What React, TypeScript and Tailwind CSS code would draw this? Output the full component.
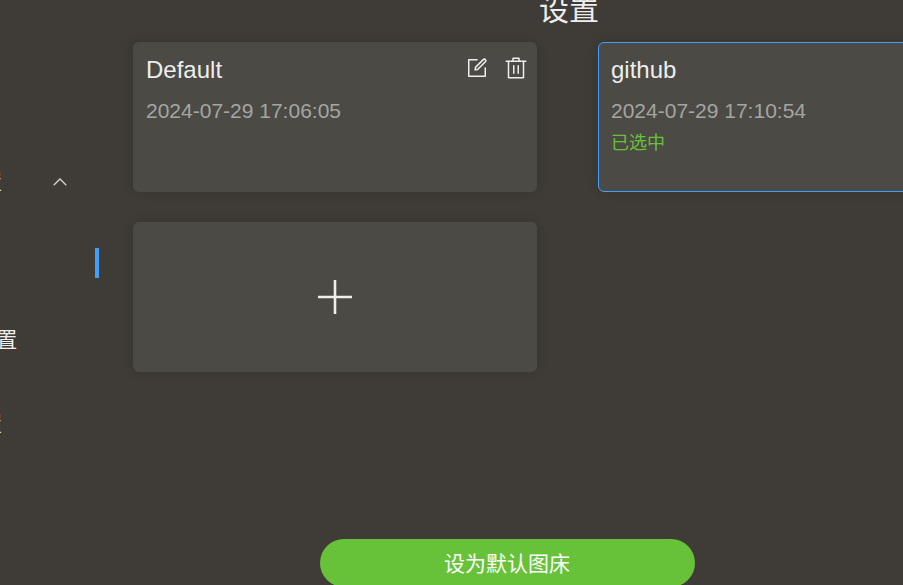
import type { ReactNode } from "react";

type Config = { name: string; updated: string; selected?: boolean };

const configs: Config[] = [
  { name: "Default", updated: "2024-07-29 17:06:05" },
  { name: "github", updated: "2024-07-29 17:10:54", selected: true },
];

function EditIcon() {
  return (
    <svg viewBox="0 0 1024 1024" className="size-6" fill="currentColor" aria-hidden="true">
      <path d="M832 512a32 32 0 1 1 64 0v352a32 32 0 0 1-32 32H160a32 32 0 0 1-32-32V160a32 32 0 0 1 32-32h352a32 32 0 0 1 0 64H192v640h640z" />
      <path d="m469.952 554.24 52.8-7.552L847.104 222.4a32 32 0 1 0-45.248-45.248L477.44 501.44l-7.552 52.8zm422.4-422.4a96 96 0 0 1 0 135.808l-331.84 331.84a32 32 0 0 1-18.112 9.088L436.8 623.68a32 32 0 0 1-36.224-36.224l15.104-105.6a32 32 0 0 1 9.024-18.112l331.904-331.84a96 96 0 0 1 135.744 0z" />
    </svg>
  );
}

function DeleteIcon() {
  return (
    <svg viewBox="0 0 1024 1024" className="size-6" fill="currentColor" aria-hidden="true">
      <path d="M160 256H96a32 32 0 0 1 0-64h256V95.936a32 32 0 0 1 32-32h256a32 32 0 0 1 32 32V192h256a32 32 0 1 1 0 64h-64v672a32 32 0 0 1-32 32H192a32 32 0 0 1-32-32zm448-64v-64H416v64zM224 896h576V256H224zm192-128a32 32 0 0 1-32-32V416a32 32 0 0 1 64 0v320a32 32 0 0 1-32 32m192 0a32 32 0 0 1-32-32V416a32 32 0 0 1 64 0v320a32 32 0 0 1-32 32" />
    </svg>
  );
}

function NavItem({ children, open }: { children: ReactNode; open?: boolean }) {
  return (
    <a href="#" className="flex h-[84px] items-center justify-between px-8 pb-1">
      <span>{children}</span>
      {open && (
        <svg viewBox="0 0 14 8" className="h-2 w-3.5" fill="none" stroke="#d6d5d2" strokeWidth="1.3" aria-hidden="true">
          <path d="M0.7 7.3 7 1l6.3 6.3" />
        </svg>
      )}
    </a>
  );
}

function ConfigCard({ name, updated, selected }: Config) {
  return (
    <article
      className={`h-[150px] rounded-md border bg-[#4b4a45] px-3 pt-3 shadow-[0_0_12px_rgba(0,0,0,0.14)] ${
        selected ? "border-[#409eff]" : "border-transparent"
      }`}
    >
      <div className="flex h-[30px] items-center justify-between">
        <h2 className="text-2xl text-[#eeeeee]">{name}</h2>
        <div className="-mr-1 flex gap-[15px] pb-1 text-[#eeeeee]">
          <button type="button" aria-label="编辑">
            <EditIcon />
          </button>
          <button type="button" aria-label="删除">
            <DeleteIcon />
          </button>
        </div>
      </div>
      <p className="mt-3 text-[21px] leading-[28px] text-[#a5a5a3]">{updated}</p>
      {selected && <p className="mt-1 text-lg leading-[28px] text-[#67c23a]">已选中</p>}
    </article>
  );
}

export default function App() {
  return (
    <div className="flex h-screen overflow-hidden bg-[#3f3b36] font-['Liberation_Sans','Noto_Sans_CJK_SC',sans-serif] text-[#eeeeee]">
      <aside className="flex w-[99px] shrink-0 justify-end overflow-hidden pt-[142px]">
        <nav className="w-[213px] shrink-0 text-[21px]">
          <NavItem open>图床设置</NavItem>
          <div className="flex h-[74px] items-center justify-end">
            <span className="h-[30px] w-1 bg-[#409eff]" />
          </div>
          <NavItem>PicGo设置</NavItem>
          <NavItem>插件设置</NavItem>
        </nav>
      </aside>
      <main className="flex min-w-0 flex-1 flex-col overflow-hidden">
        <h1 className="-mt-3 w-[940px] text-center text-[30px] leading-[44px]">设置</h1>
        <section className="mt-2.5 grid grid-cols-[404px_404px] gap-x-[61px] gap-y-[30px] pl-[34px]">
          {configs.map((config) => (
            <ConfigCard key={config.name} {...config} />
          ))}
          <button
            type="button"
            aria-label="新增配置"
            className="flex h-[150px] items-center justify-center rounded-md bg-[#4b4a45] shadow-[0_0_12px_rgba(0,0,0,0.14)]"
          >
            <svg viewBox="0 0 34 34" className="size-[34px]" stroke="#eeeeee" strokeWidth="2.6" aria-hidden="true">
              <path d="M17 0v34M0 17h34" />
            </svg>
          </button>
        </section>
        <div className="mt-auto -mb-0.5 flex justify-center pl-3">
          <button type="button" className="h-12 w-[375px] rounded-full bg-[#67c23a] pt-0.5 text-[21px] text-white">
            设为默认图床
          </button>
        </div>
      </main>
    </div>
  );
}
